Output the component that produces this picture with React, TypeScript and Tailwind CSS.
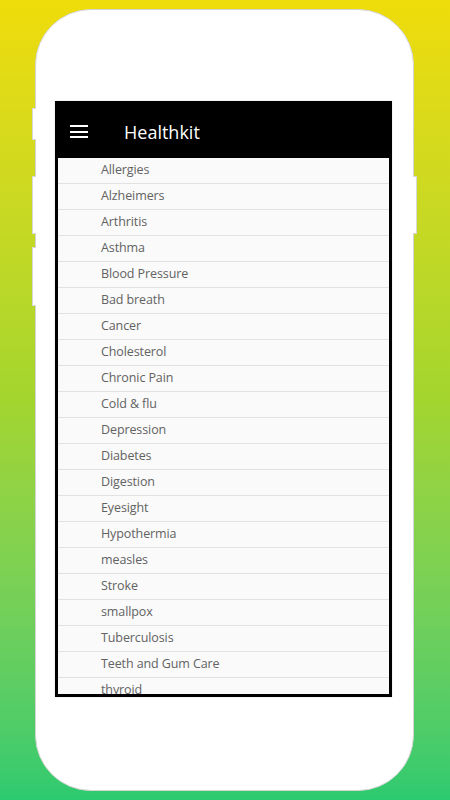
import React from 'react'

const topics = [
  'Allergies',
  'Alzheimers',
  'Arthritis',
  'Asthma',
  'Blood Pressure',
  'Bad breath',
  'Cancer',
  'Cholesterol',
  'Chronic Pain',
  'Cold & flu',
  'Depression',
  'Diabetes',
  'Digestion',
  'Eyesight',
  'Hypothermia',
  'measles',
  'Stroke',
  'smallpox',
  'Tuberculosis',
  'Teeth and Gum Care',
  'thyroid',
]

function MenuIcon() {
  return (
    <div className="flex w-[18px] flex-col gap-[3.5px]">
      <span className="h-[2px] w-full bg-white" />
      <span className="h-[2px] w-full bg-white" />
      <span className="h-[2px] w-full bg-white" />
    </div>
  )
}

export default function App() {
  return (
    <div className="h-[800px] w-[450px] overflow-hidden bg-linear-to-b from-[#efdc09] via-[#a3d52e] to-[#2cca70] pl-[35px] pt-[9px] font-['Open_Sans',sans-serif]">
      <div className="relative h-[782px] w-[379px] rounded-[56px] border border-[#d4d4d4] bg-white px-[19px] pt-[91px]">
        {/* side buttons */}
        <span className="absolute left-[-4px] top-[98px] h-[32px] w-[4px] border border-r-0 border-[#d8d8d8] bg-white" />
        <span className="absolute left-[-4px] top-[166px] h-[58px] w-[4px] border border-r-0 border-[#d8d8d8] bg-white" />
        <span className="absolute left-[-4px] top-[237px] h-[59px] w-[4px] border border-r-0 border-[#d8d8d8] bg-white" />
        <span className="absolute right-[-4px] top-[166px] h-[58px] w-[4px] border border-l-0 border-[#d8d8d8] bg-white" />

        {/* screen */}
        <div className="flex h-[596px] w-[337px] flex-col bg-black px-[3px] pb-[3px] shadow-[0_0_1px_#bbb]">
          <div className="flex h-[57px] shrink-0 items-center pt-[4px]">
            <div className="ml-[12px]">
              <MenuIcon />
            </div>
            <h1 className="ml-[36px] text-[18px] leading-none text-white">Healthkit</h1>
          </div>
          <ul className="flex-1 overflow-hidden bg-[#fafafa]">
            {topics.map((t) => (
              <li
                key={t}
                className="flex h-[26px] items-center border-b-[1.5px] border-[#e2e2e2] pb-[1px] pl-[43px] text-[12.5px] tracking-[-0.1px] text-[#626262]"
              >
                {t}
              </li>
            ))}
          </ul>
        </div>
      </div>
    </div>
  )
}
